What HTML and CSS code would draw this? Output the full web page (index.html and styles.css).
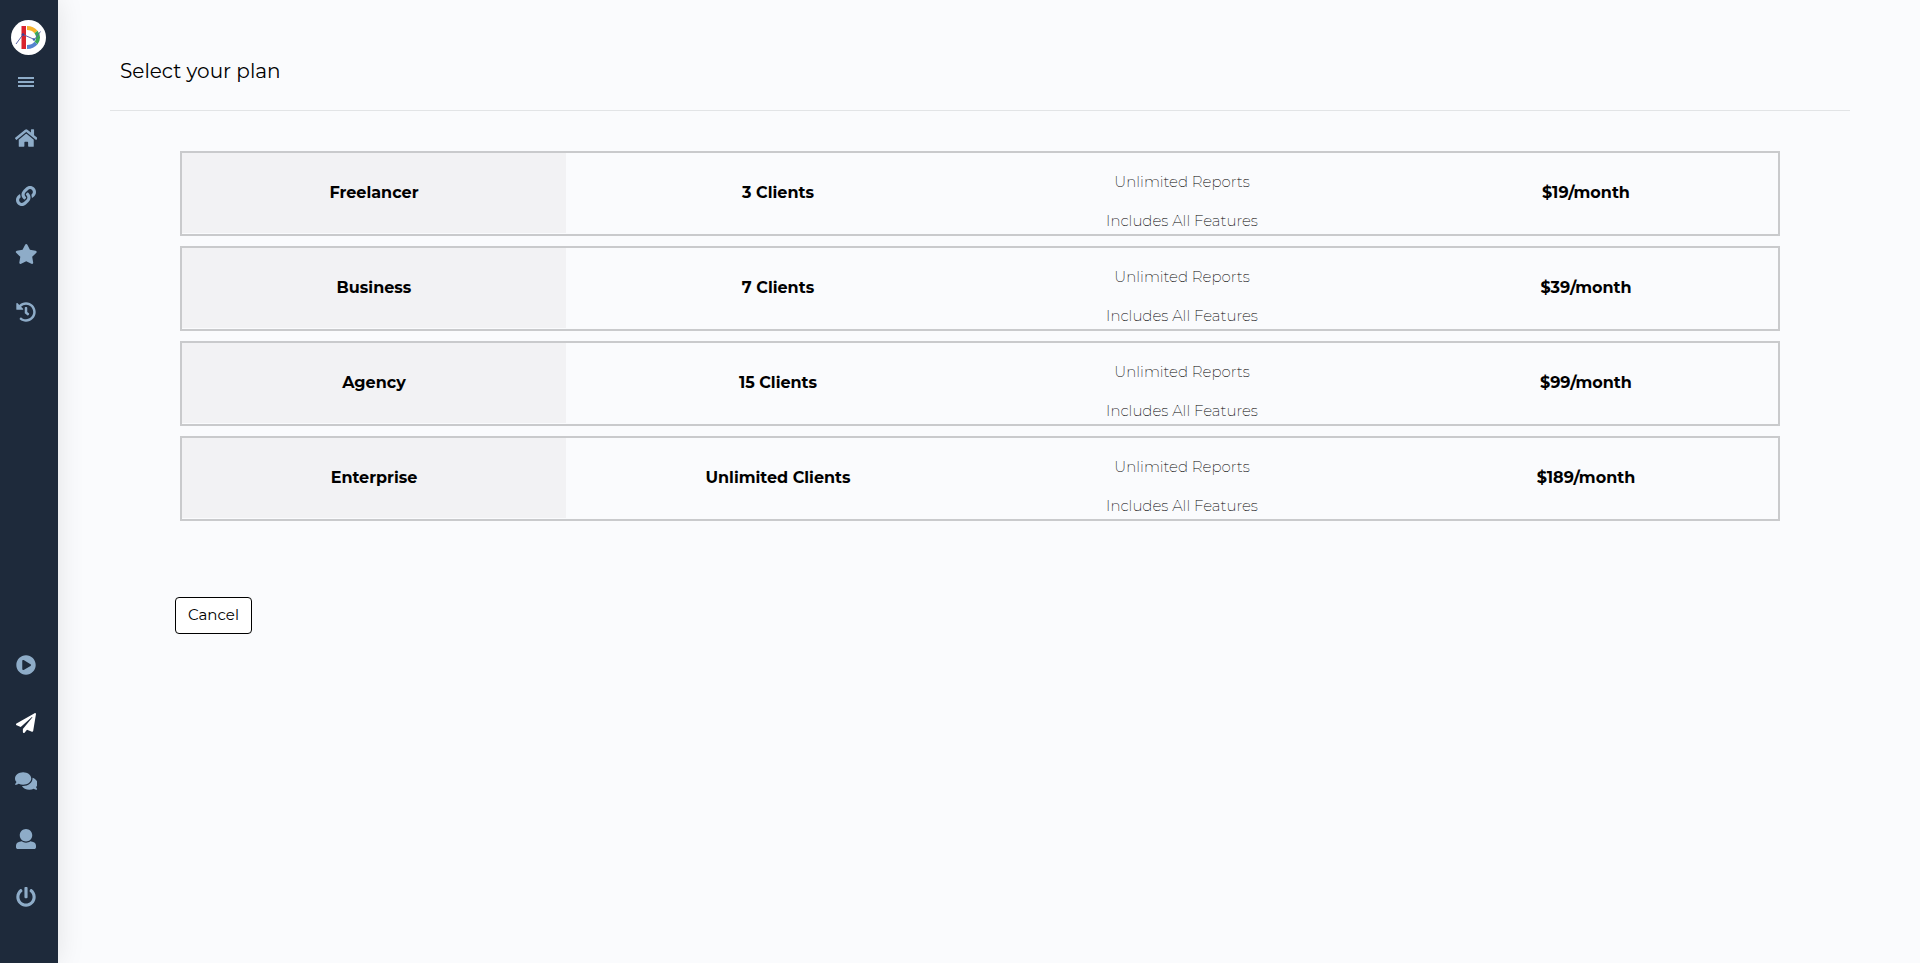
FILE: index.html
```html
<!DOCTYPE html>
<html lang="en">
<head>
<meta charset="utf-8">
<meta name="viewport" content="width=device-width, initial-scale=1">
<title>Select your plan</title>
<link rel="stylesheet" href="styles.css">
</head>
<body>
<div class="app">
  <aside class="sidebar">
    <a class="logo" href="#" aria-label="Dashboard home">
      <svg viewBox="0 0 35 35" width="35" height="35" aria-hidden="true">
        <circle cx="17.500" cy="17.500" r="17.500" fill="#fff"/>
        <path d="M10.500 6h4.500v23h-4.500z" fill="#d9232e"/>
        <path d="M16 8a11 9.500 0 0 1 9 4" fill="none" stroke="#f7b32b" stroke-width="4"/>
        <path d="M25 12a11 9.500 0 0 1 0 11" fill="none" stroke="#3aa757" stroke-width="4"/>
        <path d="M25 23a11 9.500 0 0 1-9 4" fill="none" stroke="#5583cf" stroke-width="4"/>
        <path d="M5 24l7-9.500 11.500 5L29.500 11.500" fill="none" stroke="#5a63a8" stroke-width="1"/>
        <circle cx="12" cy="14.500" r="1.300" fill="#3b3f9a"/>
        <circle cx="23" cy="19.500" r="1.300" fill="#3b5fae"/>
      </svg>
    </a>
    <button class="menu-toggle" type="button" aria-label="Toggle menu">
      <svg viewBox="0 0 16 12" width="16" height="12" aria-hidden="true"><path d="M0 1h16v2H0zM0 5h16v2H0zM0 9h16v2H0z"/></svg>
    </button>
    <nav class="nav" aria-label="Main">
      <a class="nav-link" href="#" aria-label="Home"><svg class="icon" viewBox="0 0 576 512" aria-hidden="true"><path d="M280.37 148.26L96 300.11V464a16 16 0 0 0 16 16l112.06-.29a16 16 0 0 0 15.92-16V368a16 16 0 0 1 16-16h64a16 16 0 0 1 16 16v95.64a16 16 0 0 0 16 16.05L464 480a16 16 0 0 0 16-16V300L295.67 148.26a12.19 12.19 0 0 0-15.3 0zM571.6 251.47L488 182.56V44.05a12 12 0 0 0-12-12h-56a12 12 0 0 0-12 12v72.61L318.47 43a48 48 0 0 0-61 0L4.34 251.47a12 12 0 0 0-1.6 16.9l25.5 31A12 12 0 0 0 45.15 301l235.22-193.74a12.19 12.19 0 0 1 15.3 0L530.9 301a12 12 0 0 0 16.9-1.6l25.5-31a12 12 0 0 0-1.7-16.93z"/></svg></a>
      <a class="nav-link" href="#" aria-label="Connections"><svg class="icon" viewBox="0 0 512 512" aria-hidden="true"><path d="M326.612 185.391c59.747 59.809 58.927 155.698.36 214.59-.11.12-.24.25-.36.37l-67.2 67.2c-59.27 59.27-155.699 59.262-214.96 0-59.27-59.26-59.27-155.7 0-214.96l37.106-37.106c9.84-9.84 26.786-3.3 27.294 10.606.648 17.722 3.826 35.527 9.69 52.721 1.986 5.822.567 12.262-3.783 16.612l-13.087 13.087c-28.026 28.026-28.905 73.66-1.155 101.96 28.024 28.579 74.086 28.749 102.325.51l67.2-67.19c28.191-28.191 28.073-73.757 0-101.83-3.701-3.694-7.429-6.564-10.341-8.569a16.037 16.037 0 0 1-6.947-12.606c-.396-10.567 3.348-21.456 11.698-29.806l21.054-21.055c5.521-5.521 14.182-6.199 20.584-1.731a152.482 152.482 0 0 1 20.522 17.197zM467.547 44.449c-59.261-59.262-155.69-59.27-214.96 0l-67.2 67.2c-.12.12-.25.25-.36.37-58.566 58.892-59.387 154.781.36 214.59a152.454 152.454 0 0 0 20.521 17.196c6.402 4.468 15.064 3.789 20.584-1.731l21.054-21.055c8.35-8.35 12.094-19.239 11.698-29.806a16.037 16.037 0 0 0-6.947-12.606c-2.912-2.005-6.64-4.875-10.341-8.569-28.073-28.073-28.191-73.639 0-101.83l67.2-67.19c28.239-28.239 74.3-28.069 102.325.51 27.75 28.3 26.872 73.934-1.155 101.96l-13.087 13.087c-4.35 4.35-5.769 10.79-3.783 16.612 5.864 17.194 9.042 34.999 9.69 52.721.509 13.906 17.454 20.446 27.294 10.606l37.106-37.106c59.271-59.259 59.271-155.699.001-214.959z"/></svg></a>
      <a class="nav-link" href="#" aria-label="Favourites"><svg class="icon" viewBox="0 0 576 512" aria-hidden="true"><path d="M259.3 17.8L194 150.2 47.9 171.5c-26.2 3.8-36.7 36.1-17.7 54.6l105.7 103-25 145.5c-4.5 26.3 23.2 46 46.4 33.7L288 439.6l130.7 68.7c23.2 12.2 50.9-7.4 46.4-33.7l-25-145.5 105.7-103c19-18.5 8.5-50.8-17.7-54.6L382 150.2 316.7 17.8c-11.7-23.6-45.6-23.9-57.4 0z"/></svg></a>
      <a class="nav-link" href="#" aria-label="History"><svg class="icon" viewBox="0 0 512 512" aria-hidden="true"><path d="M504 255.531c.253 136.64-111.18 248.372-247.82 248.468-59.015.042-113.223-20.53-155.822-54.911-11.077-8.94-11.905-25.541-1.839-35.607l11.267-11.267c8.609-8.609 22.353-9.551 31.891-1.984C173.062 425.135 212.781 440 256 440c101.705 0 184-82.311 184-184 0-101.705-82.311-184-184-184-48.814 0-93.149 18.969-126.068 49.932l50.754 50.754c10.08 10.08 2.941 27.314-11.313 27.314H24c-8.837 0-16-7.163-16-16V38.627c0-14.254 17.234-21.393 27.314-11.314l49.372 49.372C129.209 34.136 189.552 8 256 8c136.81 0 247.747 110.78 248 247.531zm-180.912 78.784l9.823-12.63c8.138-10.463 6.253-25.542-4.21-33.679L288 256.349V152c0-13.255-10.745-24-24-24h-16c-13.255 0-24 10.745-24 24v135.651l65.409 50.874c10.463 8.137 25.541 6.253 33.679-4.21z"/></svg></a>
    </nav>
    <nav class="nav nav-bottom" aria-label="Account">
      <a class="nav-link" href="#" aria-label="Tutorials"><svg class="icon" viewBox="0 0 512 512" aria-hidden="true"><path d="M256 8C119 8 8 119 8 256s111 248 248 248 248-111 248-248S393 8 256 8zm115.7 272l-176 101c-15.8 8.8-35.7-2.5-35.7-21V152c0-18.4 19.8-29.8 35.7-21l176 107c16.4 9.2 16.4 32.900 0 42z"/></svg></a>
      <a class="nav-link is-active" href="#" aria-label="Plans" aria-current="page"><svg class="icon" viewBox="0 0 512 512" aria-hidden="true"><path d="M476 3.2L12.5 270.6c-18.1 10.4-15.8 35.6 2.2 43.2L121 358.4l287.3-253.2c5.5-4.9 13.3 2.6 8.6 8.3L176 407v80.5c0 23.6 28.5 32.9 42.5 15.8L282 426l124.6 52.2c14.2 6 30.4-2.9 33-18.2l72-432C515 7.800 493.3-6.800 476 3.2z"/></svg></a>
      <a class="nav-link" href="#" aria-label="Support"><svg class="icon" viewBox="0 0 576 512" aria-hidden="true"><path d="M416 192c0-88.4-93.1-160-208-160S0 103.6 0 192c0 34.3 14.1 65.9 38 92-13.4 30.2-35.5 54.2-35.8 54.5-2.2 2.3-2.8 5.700-1.5 8.700S4.8 352 8 352c36.600 0 66.900-12.300 88.700-25 32.200 15.700 70.300 25 111.300 25 114.900 0 208-71.600 208-160zm122 220c23.900-26 38-57.700 38-92 0-66.900-53.500-124.200-129.300-148.100.9 6.600 1.300 13.300 1.300 20.100 0 105.900-107.700 192-240 192-10.800 0-21.300-.8-31.700-1.900C207.800 439.600 281.800 480 368 480c41 0 79.100-9.200 111.300-25 21.800 12.700 52.100 25 88.700 25 3.200 0 6.100-1.900 7.300-4.800 1.300-2.900.7-6.300-1.500-8.700-.3-.3-22.400-24.200-35.800-54.500z"/></svg></a>
      <a class="nav-link" href="#" aria-label="Profile"><svg class="icon" viewBox="0 0 512 512" aria-hidden="true"><path d="M256 0c88.366 0 160 71.634 160 160s-71.634 160-160 160S96 248.366 96 160 167.634 0 256 0zm183.283 333.821l-71.313-17.828c-74.923 53.89-165.738 41.864-223.94 0l-71.313 17.828C29.981 344.505 0 382.903 0 426.955V464c0 26.51 21.49 48 48 48h416c26.51 0 48-21.49 48-48v-37.045c0-44.052-29.981-82.45-72.717-93.134z"/></svg></a>
      <a class="nav-link" href="#" aria-label="Log out"><svg class="icon" viewBox="0 0 512 512" aria-hidden="true"><path d="M400 54.1c63 45 104 118.6 104 201.9 0 136.8-110.8 247.7-247.5 248C120 504.3 8.2 393 8 256.4 7.9 173.1 48.9 99.3 111.8 54.2c11.7-8.3 28-4.8 35 7.7L162.6 90c5.9 10.5 3.1 23.8-6.6 31-41.5 30.8-68 79.6-68 134.9-.1 92.3 74.5 168.1 168 168.1 91.6 0 168.6-74.2 168-169.1-.3-51.8-24.7-101.8-68.1-134-9.7-7.2-12.4-20.5-6.5-30.9l15.8-28.1c7-12.4 23.2-16.1 34.8-7.8zM296 264V24c0-13.3-10.7-24-24-24h-32c-13.3 0-24 10.7-24 24v240c0 13.3 10.7 24 24 24h32c13.3 0 24-10.7 24-24z"/></svg></a>
    </nav>
  </aside>

  <main class="content">
    <h1 class="title">Select your plan</h1>
    <div class="plans">
      <section class="plan">
        <h2 class="cell plan-name">Freelancer</h2>
        <p class="cell">3 Clients</p>
        <div class="features"><p class="feature">Unlimited Reports</p><p class="feature">Includes All Features</p></div>
        <p class="cell">$19/month</p>
      </section>
      <section class="plan">
        <h2 class="cell plan-name">Business</h2>
        <p class="cell">7 Clients</p>
        <div class="features"><p class="feature">Unlimited Reports</p><p class="feature">Includes All Features</p></div>
        <p class="cell">$39/month</p>
      </section>
      <section class="plan">
        <h2 class="cell plan-name">Agency</h2>
        <p class="cell">15 Clients</p>
        <div class="features"><p class="feature">Unlimited Reports</p><p class="feature">Includes All Features</p></div>
        <p class="cell">$99/month</p>
      </section>
      <section class="plan">
        <h2 class="cell plan-name">Enterprise</h2>
        <p class="cell">Unlimited Clients</p>
        <div class="features"><p class="feature">Unlimited Reports</p><p class="feature">Includes All Features</p></div>
        <p class="cell">$189/month</p>
      </section>
    </div>
    <button class="cancel" type="button">Cancel</button>
  </main>
</div>
</body>
</html>
```
FILE: styles.css
```css
*,
*::before,
*::after {
  box-sizing: border-box;
}

body {
  margin: 0;
  background: #fafbfd;
  color: #000;
  font-family: Montserrat, Inter, "Open Sans", sans-serif;
  font-size: 15px;
  line-height: 24px;
}

h1,
h2,
p {
  margin: 0;
}

.app {
  display: flex;
  min-height: 100vh;
}

.sidebar {
  display: flex;
  flex: 0 0 58px;
  flex-direction: column;
  align-items: flex-start;
  padding: 20px 0 37px;
  background: #1e2a3b;
  box-shadow: 0 0 28px rgba(0, 0, 0, 0.1);
}

.logo {
  display: block;
  height: 35px;
  margin-left: 11px;
}

.logo svg {
  display: block;
}

.menu-toggle {
  display: flex;
  align-items: center;
  justify-content: center;
  width: 52px;
  height: 54px;
  padding: 0;
  border: 0;
  background: none;
  fill: #8eacc8;
  cursor: pointer;
}

.nav {
  display: flex;
  flex-direction: column;
  width: 52px;
}

.nav-bottom {
  margin-top: auto;
}

.nav-link {
  display: flex;
  align-items: center;
  justify-content: center;
  height: 58px;
  fill: #8eacc8;
}

.nav-link.is-active {
  fill: #fff;
}

.icon {
  height: 20px;
}

.content {
  flex: 1;
  min-width: 0;
  padding: 52px 70px 40px 52px;
}

.title {
  padding: 7px 10px 26px;
  border-bottom: 1px solid #e2e4e6;
  font-size: 20px;
  font-weight: 400;
  line-height: 25px;
}

.plans {
  display: flex;
  flex-direction: column;
  gap: 10px;
  padding: 40px 70px 0;
}

.plan {
  display: grid;
  grid-template-columns: repeat(4, 1fr);
  column-gap: 20px;
  min-height: 85px;
  padding-bottom: 1px;
  border: 2px solid #c9cacc;
  text-align: center;
}

.cell {
  height: 80px;
  font-size: 16px;
  font-weight: 700;
  line-height: 80px;
}

.plan-name {
  background: #f2f2f4;
}

.features {
  display: flex;
  flex-direction: column;
  gap: 15px;
  padding-top: 17px;
}

.feature {
  font-weight: 200;
}

.cancel {
  height: 37px;
  margin: 76px 0 0 65px;
  padding: 0 12px 2px;
  border: 1px solid #000;
  border-radius: 4px;
  background: #fff;
  color: #000;
  font: inherit;
  cursor: pointer;
}
```
